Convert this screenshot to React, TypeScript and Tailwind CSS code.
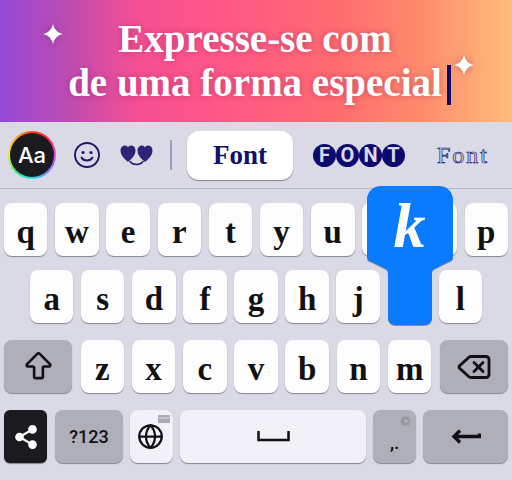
import { ArrowBigUp, Delete, Globe } from 'lucide-react';
import clsx from 'clsx';

const serif = "font-['Liberation_Serif',serif]";
const sans = "font-['Roboto',sans-serif]";

function Sparkle({ className }: { className?: string }) {
  return (
    <svg viewBox="0 0 20 20" className={clsx('absolute h-5 w-5 fill-white drop-shadow-[0_0_4px_rgba(120,40,120,0.5)]', className)}>
      <path d="M10 0C11 5 14.5 8.8 20 10C14.5 11.2 11 15 10 20C9 15 5.500 11.2 0 10C5.500 8.800 9 5 10 0Z" />
    </svg>
  );
}

function LetterKey({ label }: { label: string }) {
  return (
    <div className={clsx('flex h-[53px] flex-1 items-center justify-center rounded-[8px] bg-[#fdfdfe] pt-[6px] text-[33px] leading-none font-bold text-[#111114] shadow-[0_1px_1px_#85858f]', serif)}>
      {label}
    </div>
  );
}

function GrayKey({ className, children }: { className?: string; children: React.ReactNode }) {
  return (
    <div className={clsx('relative flex h-[53px] items-center justify-center rounded-[8px] bg-[#aeafb8] text-[#111114] shadow-[0_1px_1px_#85858f]', className)}>
      {children}
    </div>
  );
}

function Toolbar() {
  return (
    <div className="flex h-[67px] items-center border-b border-[#b9b9c4] pl-2">
      {/* theme button */}
      <div className="flex h-[48px] w-[48px] items-center justify-center rounded-full bg-[conic-gradient(#ff3d1f,#ff2a4d,#e94ce0,#7a7cff,#29e0e8,#38e86a,#f4ee2c,#ffa51f,#ff3d1f)]">
        <div className="flex h-[44px] w-[44px] items-center justify-center rounded-full bg-[#1b1b1f] font-['Inter',sans-serif] text-[22px] font-medium text-white">Aa</div>
      </div>
      {/* smiley */}
      <svg viewBox="0 0 26 26" className="ml-[18px] h-[26px] w-[26px] fill-none stroke-[#1d1a6c] stroke-[1.9]">
        <circle cx="13" cy="13" r="12" />
        <circle cx="9" cy="10.5" r="1.6" className="fill-[#1d1a6c] stroke-none" />
        <circle cx="17" cy="10.5" r="1.6" className="fill-[#1d1a6c] stroke-none" />
        <path d="M7.5 15.5C9.500 19.5 16.5 19.5 18.5 15.5" strokeLinecap="round" />
      </svg>
      {/* hearts */}
      <svg viewBox="0 0 33 26" className="mt-[2px] ml-[20px] h-[26px] w-[33px]">
        <path d="M8 19C3 15 0.5 11.5 0.5 7.5C0.5 4 3 2.5 5 2.5C6.5 2.5 7.6 3.4 8 4.5C8.5 3.4 9.6 2.5 11 2.5C13.5 2.5 15.5 4.3 15.5 7.5C15.5 11.5 13 15 8 19Z" fill="#2b2478" />
        <path d="M25 19C20 15 17.5 11.5 17.5 7.5C17.5 4 20 2.5 22 2.5C23.5 2.5 24.6 3.4 25 4.5C25.5 3.4 26.600 2.5 28 2.5C30.5 2.5 32.5 4.3 32.5 7.5C32.5 11.5 30 15 25 19Z" fill="#2b2478" />
        <path d="M10 18.5C13 22.5 20 22.5 23 18.5" fill="none" stroke="#1d1a6c" strokeWidth="1.3" strokeLinecap="round" />
      </svg>
      <div className="ml-[17px] h-[30px] w-[2px] bg-[#9c9cc2]" />
      {/* font styles */}
      <div className={clsx('ml-[15px] flex h-[49px] w-[106px] items-center justify-center rounded-[12px] bg-white text-[27px] font-bold text-[#10106b] shadow-[0_1px_1px_#85858f]', serif)}>Font</div>
      <div className={clsx('ml-[20px] flex text-[20px] font-bold text-[#d9dae6]', sans)}>
        {['F', 'O', 'N', 'T'].map((c) => (
          <span key={c} className="flex h-[23px] w-[23px] items-center justify-center rounded-full bg-[#0e0a6d]">{c}</span>
        ))}
      </div>
      <div className={clsx('ml-[32px] text-[24px] tracking-[2px] text-transparent [-webkit-text-stroke:0.7px_#1d1a6c]', serif)}>Font</div>
    </div>
  );
}

function KeyPopup() {
  return (
    <div className="absolute top-[-84px] left-[-21px] h-[139px] w-[86px]">
      <svg viewBox="0 0 86 139" className="absolute inset-0 h-full w-full drop-shadow-[0_1px_0.5px_rgba(60,60,80,0.5)]">
        <path d="M14 0H72C80 0 86 6 86 14V70C86 74 84 75 81 76L69 82C65 84 65 85 65 88V131C65 136 62 139 57 139H29C24 139 21 136 21 131V88C21 85 21 84 17 82L5 76C2 75 0 74 0 70V14C0 6 6 0 14 0Z" fill="#0a7bff" />
      </svg>
      <div className={clsx('absolute top-[10px] left-0 w-full text-center text-[64px] leading-[60px] font-bold text-white italic', serif)}>k</div>
    </div>
  );
}

export default function App() {
  const rowOne = ['q', 'w', 'e', 'r', 't', 'y', 'u', 'i', 'o', 'p'];
  const rowTwo = ['a', 's', 'd', 'f', 'g', 'h', 'j'];
  const rowThree = ['z', 'x', 'c', 'v', 'b', 'n', 'm'];

  return (
    <div className="h-[480px] w-[512px] overflow-hidden bg-[#d9dae6]">
      {/* banner */}
      <div className={clsx('relative h-[122px] bg-[linear-gradient(90deg,#9549d8_0%,#c04bb0_14%,#f64f93_27%,#ff5688_42%,#ff6a70_65%,#ff8a6c_82%,#ffbd7a_100%)] pt-[17px] pr-[2px] text-center text-[39px] leading-[44px] font-bold text-white [text-shadow:0_0_6px_rgba(130,30,90,0.45)]', serif)}>
        <Sparkle className="top-[24px] left-[43px]" />
        <div>Expresse-se com</div>
        <div>
          <span className="relative">
            de uma forma especial
            <span className="absolute top-[4px] right-[-9px] h-[40px] w-[4px] bg-[#0b0a6e]" />
          </span>
        </div>
        <Sparkle className="top-[55px] left-[454px]" />
      </div>

      <Toolbar />

      {/* keyboard */}
      <div className="flex flex-col pt-[14px]">
        <div className="flex gap-[7.7px] px-1">
          {rowOne.map((k) => <LetterKey key={k} label={k} />)}
        </div>
        <div className="mt-[14px] flex gap-[7.7px] px-[30px]">
          {rowTwo.map((k) => <LetterKey key={k} label={k} />)}
          <div className="relative h-[53px] flex-1">
            <KeyPopup />
          </div>
          <LetterKey label="l" />
        </div>
        <div className="mt-[17px] flex gap-[8.5px] px-1">
          <GrayKey className="w-[68px]"><ArrowBigUp size={35} strokeWidth={1.8} /></GrayKey>
          <div className="flex flex-1 gap-[7.7px]">
            {rowThree.map((k) => <LetterKey key={k} label={k} />)}
          </div>
          <GrayKey className="w-[68px]"><Delete size={36} strokeWidth={1.9} /></GrayKey>
        </div>
        <div className="mt-[17px] flex gap-[7px] px-1">
          <div className="mr-[1px] flex h-[53px] w-[43px] items-center justify-center rounded-[6px] bg-[#1b1b1f] shadow-[0_1px_1px_#85858f]">
            <svg viewBox="0 0 24 24" className="h-[26px] w-[26px] fill-white stroke-white stroke-2">
              <circle cx="18" cy="5" r="3" />
              <circle cx="6" cy="12" r="3" />
              <circle cx="18" cy="19" r="3" />
              <path d="M6 12L18 5M6 12L18 19" />
            </svg>
          </div>
          <GrayKey className={clsx('w-[68px] text-[18px] font-medium', sans)}>?123</GrayKey>
          <div className="relative flex h-[53px] w-[43px] items-center justify-center rounded-[8px] bg-[#f1f1f7] pr-[2px] text-[#111114] shadow-[0_1px_1px_#85858f]">
            <Globe size={27} strokeWidth={2} />
            <svg viewBox="0 0 12 8" className="absolute top-[5px] right-[3px] h-[8px] w-[12px]">
              <rect width="12" height="8" rx="1" fill="#a9a9b2" />
              <path d="M2 2V4M4 2V4M6 2V4M8 2V4M10 2V4" stroke="#f1f1f7" strokeWidth="0.8" />
            </svg>
          </div>
          <div className="flex h-[53px] w-[186px] items-center justify-center rounded-[8px] bg-[#f1f1f7] shadow-[0_1px_1px_#85858f]">
            <svg viewBox="0 0 33 11" className="h-[11px] w-[33px] fill-none stroke-[#111114] stroke-[2.5]">
              <path d="M1.500 0V9H31.500V0" />
            </svg>
          </div>
          <GrayKey className="w-[43px]">
            <svg viewBox="0 0 24 24" className="absolute top-[5px] right-[4px] h-[12px] w-[12px] fill-[#97979f]">
              <path d="M12 8a4 4 0 1 0 0 8 4 4 0 0 0 0-8Zm9 6.2-2.3.6-.6 1.500 1.200 2-2.700 2.700-2-1.200-1.500.6-.6 2.300h-3l-.6-2.300-1.500-.6-2 1.200-2.700-2.700 1.200-2-.6-1.500L1 14.200v-3.800l2.300-.6.6-1.500-1.200-2 2.700-2.700 2 1.200 1.500-.6.6-2.200h3.800l.6 2.200 1.500.6 2-1.200 2.700 2.700-1.200 2 .6 1.500 2.300.6Z" />
            </svg>
            <span className={clsx('absolute bottom-[11px] left-[17px] text-[17px] leading-none font-bold', sans)}>,.</span>
          </GrayKey>
          <GrayKey className="flex-1">
            <svg viewBox="0 0 30 18" className="h-[18px] w-[30px] fill-none stroke-[#111114] stroke-[3.4]">
              <path d="M28.500 5.500V8.500H3M9 2.500L3 8.500L9 14.500" />
            </svg>
          </GrayKey>
        </div>
      </div>
    </div>
  );
}
